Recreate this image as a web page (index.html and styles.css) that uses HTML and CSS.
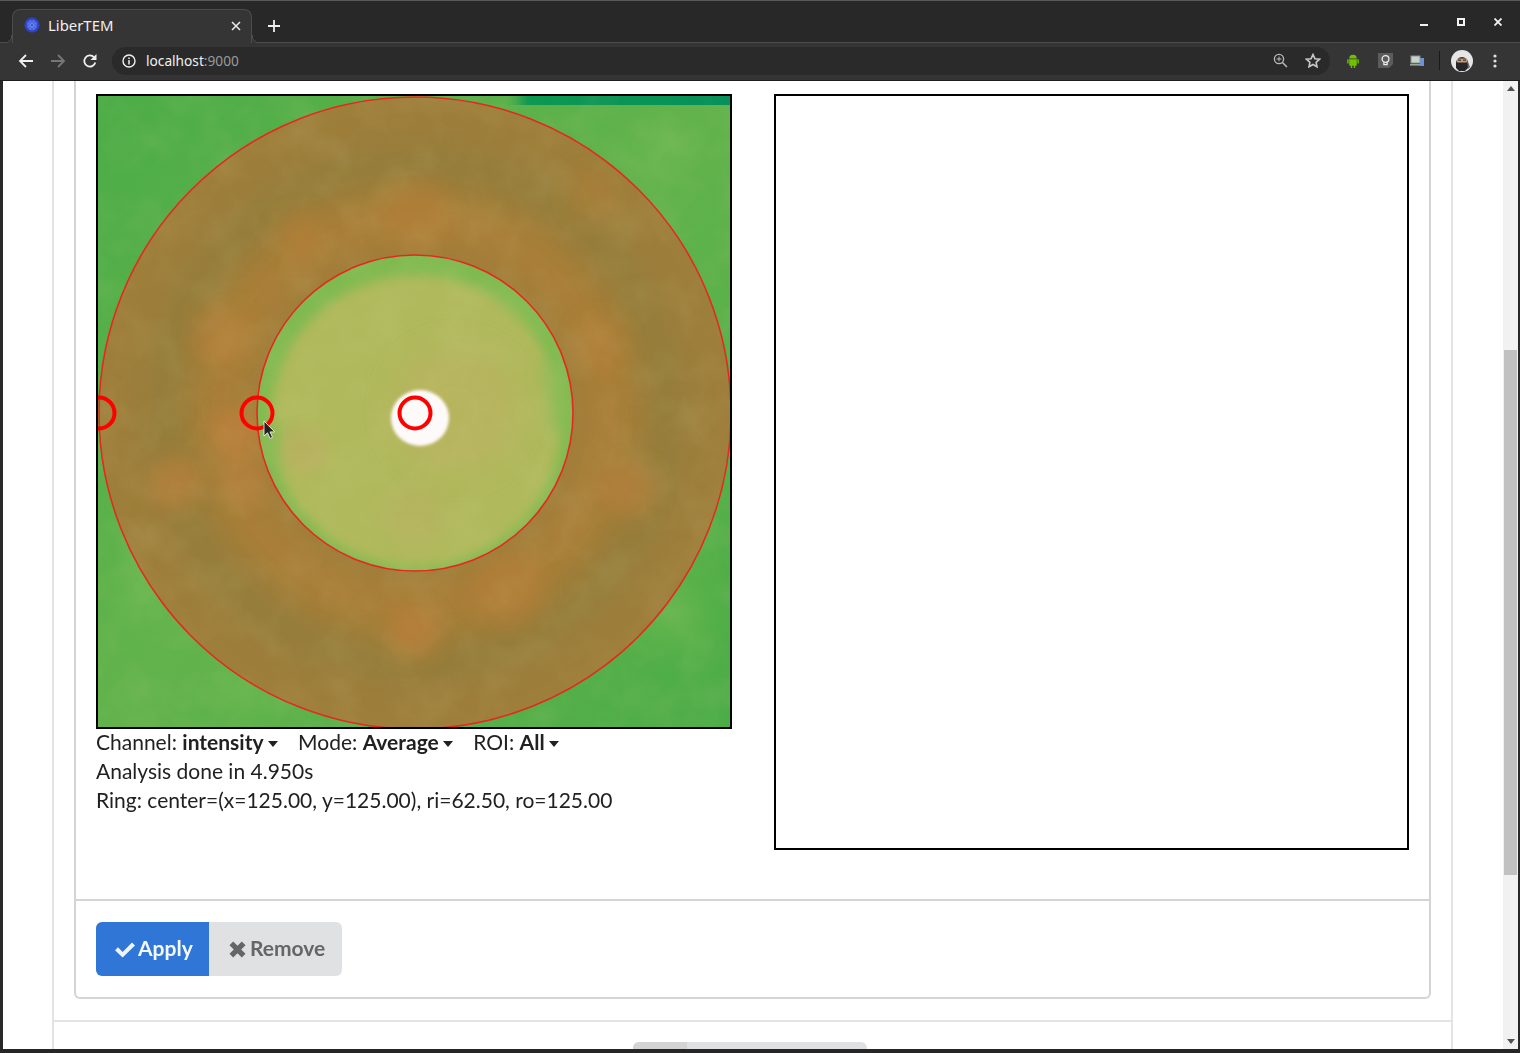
FILE: index.html
```html
<!DOCTYPE html>
<html lang="en">
<head>
<meta charset="utf-8">
<title>LiberTEM</title>
<link rel="stylesheet" href="styles.css">
</head>
<body>
<div class="window">
  <div class="tabstrip">
    <div class="tab">
      <svg class="favicon" width="16" height="16" viewBox="0 0 16 16"><circle cx="8" cy="8" r="7.5" fill="#2b46c8"/><circle cx="8" cy="8" r="5.2" fill="#5a6ee8"/><circle cx="8" cy="8" r="2.6" fill="#7fa0f5"/><path d="M3 8h10M8 3v10M4.5 4.5l7 7M11.5 4.5l-7 7" stroke="#3a4fd0" stroke-width=".7"/></svg>
      <span class="tab-title">LiberTEM</span>
      <svg class="tab-close" width="10" height="10" viewBox="0 0 10 10"><path d="M1 1l8 8M9 1l-8 8" stroke="#e8e8e8" stroke-width="1.6"/></svg>
    </div>
    <svg class="new-tab" width="12" height="12" viewBox="0 0 12 12"><path d="M6 0v12M0 6h12" stroke="#f0f0f0" stroke-width="1.8"/></svg>
    <div class="win-controls">
      <svg width="8" height="8" viewBox="0 0 8 8"><path d="M0 7h8" stroke="#f2f2f2" stroke-width="2"/></svg>
      <svg width="8" height="8" viewBox="0 0 8 8"><rect x="1" y="1" width="6" height="6" fill="none" stroke="#f2f2f2" stroke-width="2"/></svg>
      <svg width="8" height="8" viewBox="0 0 8 8"><path d="M.5.5l7 7M7.5.5l-7 7" stroke="#f2f2f2" stroke-width="1.8"/></svg>
    </div>
  </div>
  <div class="toolbar">
    <svg class="nav-icon" width="16" height="16" viewBox="0 0 16 16"><path d="M15 8H2M8 2L2 8l6 6" fill="none" stroke="#f0f0f0" stroke-width="1.8"/></svg>
    <svg class="nav-icon" width="16" height="16" viewBox="0 0 16 16"><path d="M1 8h13M8 2l6 6-6 6" fill="none" stroke="#777" stroke-width="1.8"/></svg>
    <svg class="nav-icon" width="16" height="16" viewBox="0 0 16 16"><path d="M13.3 9.5A5.6 5.6 0 1 1 12 4.2" fill="none" stroke="#f0f0f0" stroke-width="1.8"/><path d="M14.5 1v6h-6z" fill="#f0f0f0"/></svg>
    <div class="omnibox">
      <svg width="14" height="14" viewBox="0 0 14 14"><circle cx="7" cy="7" r="6" fill="none" stroke="#f0f0f0" stroke-width="1.4"/><path d="M7 6v4.4M7 3.4v1.6" stroke="#f0f0f0" stroke-width="1.5"/></svg>
      <span class="url">localhost<span class="url-port">:9000</span></span>
      <span class="omni-spacer"></span>
      <svg width="15" height="15" viewBox="0 0 15 15"><circle cx="6" cy="6" r="4.6" fill="none" stroke="#bbb" stroke-width="1.3"/><path d="M9.5 9.5l4.5 4.5" stroke="#bbb" stroke-width="1.5"/><path d="M3.6 6h4.8M6 3.6v4.8" stroke="#bbb" stroke-width="1"/></svg>
      <svg width="16" height="15" viewBox="0 0 16 15"><path d="M8 1.5l1.9 4.2 4.6.5-3.4 3.1.9 4.5L8 11.5l-4 2.3.9-4.5L1.5 6.2l4.6-.5z" fill="none" stroke="#c8c8c8" stroke-width="1.6"/></svg>
    </div>
    <div class="extensions">
      <svg class="ext-android" width="12" height="14" viewBox="0 0 12 14"><path d="M2.2 4.6a3.8 3.8 0 0 1 7.6 0zM2.2 5.2h7.6v5.6a1 1 0 0 1-1 1H3.2a1 1 0 0 1-1-1zM.2 5.2h1.4v4.4H.2zM10.4 5.2h1.4v4.4h-1.4zM3.8 11.5h1.4V14H3.8zM6.8 11.5h1.4V14H6.8z" fill="#70c000"/></svg>
      <svg class="ext-bulb" width="15" height="15" viewBox="0 0 15 15"><rect width="15" height="15" fill="#5c5c5c"/><path d="M15 11l-4 4h4z" fill="#353535"/><circle cx="7.5" cy="6" r="3.4" fill="none" stroke="#eee" stroke-width="1.3"/><path d="M5.9 9.2v2.4h3.2V9.2" fill="none" stroke="#eee" stroke-width="1.3"/></svg>
      <svg class="ext-device" width="14" height="12" viewBox="0 0 14 12"><rect x="1" y="1" width="9" height="7" fill="#c9d2c9" stroke="#8a948a"/><rect y="9" width="11" height="1.6" fill="#9aa39a"/><rect x="10" y="3" width="4" height="8" fill="#6d94d2"/></svg>
      <span class="ext-divider"></span>
      <svg class="ext-avatar" width="22" height="22" viewBox="0 0 22 22"><circle cx="11" cy="11" r="11" fill="#e6e6e6"/><path d="M5 13a6 6 0 0 1 12 0v5l-3 3H8l-3-3z" fill="#24262a"/><rect x="6" y="8.5" width="10" height="4" rx="1" fill="#c89a70"/><rect x="7" y="9.6" width="3" height="1" fill="#222"/><rect x="12" y="9.6" width="3" height="1" fill="#222"/><path d="M16 9l3 8-2 2z" fill="#6a6a6a"/></svg>
      <svg class="ext-menu" width="4" height="14" viewBox="0 0 4 14"><circle cx="2" cy="2" r="1.6" fill="#e0e0e0"/><circle cx="2" cy="7" r="1.6" fill="#e0e0e0"/><circle cx="2" cy="12" r="1.6" fill="#e0e0e0"/></svg>
    </div>
  </div>
  <div class="viewport">
    <main class="page">
      <section class="outer-segment">
        <div class="card">
          <div class="card-body">
            <div class="col-left">
              <svg class="frame frame-image" width="636" height="635" viewBox="98 96 632 631" role="img" aria-label="Average intensity image with ring selection">
                <defs>
                  <filter id="blur6" x="-30%" y="-30%" width="160%" height="160%"><feGaussianBlur stdDeviation="6"/></filter>
                  <filter id="blur10" x="-30%" y="-30%" width="160%" height="160%"><feGaussianBlur stdDeviation="9"/></filter>
                  <filter id="blur18" x="-30%" y="-30%" width="160%" height="160%"><feGaussianBlur stdDeviation="16"/></filter>
                  <filter id="blur2" x="-30%" y="-30%" width="160%" height="160%"><feGaussianBlur stdDeviation="1.6"/></filter>
                  <filter id="mottle" x="0" y="0" width="100%" height="100%"><feTurbulence type="fractalNoise" baseFrequency=".025" numOctaves="3" seed="7"/><feColorMatrix values="0 0 0 0 .75  0 0 0 0 .72  0 0 0 0 .35  1.1 0 0 0 -.42"/></filter>
                  <clipPath id="ringClip"><path clip-rule="evenodd" d="M415 97a316 316 0 1 0 .01 0zM415 255a158 158 0 1 1-.01 0z"/></clipPath>
                  <clipPath id="discClip"><circle cx="415" cy="413" r="158"/></clipPath>
                  <linearGradient id="bgGrad" x1="0" y1="0" x2="1" y2="1"><stop offset="0" stop-color="#4cad47"/><stop offset=".5" stop-color="#62b34c"/><stop offset="1" stop-color="#4cad47"/></linearGradient>
                  <linearGradient id="stripGrad" x1="0" y1="0" x2="1" y2="0"><stop offset="0" stop-color="#36a64c" stop-opacity="0"/><stop offset=".1" stop-color="#0d9850"/><stop offset="1" stop-color="#06905a"/></linearGradient>
                </defs>
                <rect x="98" y="96" width="632" height="632" fill="url(#bgGrad)"/>
                <g filter="url(#blur18)" fill="#6ab84f" opacity=".7">
                  <circle cx="150" cy="590" r="36"/><circle cx="250" cy="680" r="36"/><circle cx="670" cy="610" r="36"/><circle cx="660" cy="150" r="30"/>
                </g>
                <rect x="505" y="96" width="225" height="9" fill="url(#stripGrad)"/>
                <g clip-path="url(#ringClip)">
                  <rect x="98" y="96" width="632" height="632" fill="#9e7e3b"/>
                  <circle cx="415" cy="413" r="195" fill="none" stroke="#ad7f39" stroke-width="50" opacity=".8" filter="url(#blur18)"/>
                  <circle cx="415" cy="413" r="252" fill="none" stroke="#8f7e3e" stroke-width="26" opacity=".8" filter="url(#blur18)"/>
                  <g filter="url(#blur10)" fill="#b8803a">
                    <circle cx="237" cy="432" r="25"/>
                    <circle cx="175" cy="483" r="26" opacity=".7"/>
                    <circle cx="413" cy="632" r="26" opacity=".75"/>
                    <circle cx="510" cy="590" r="36" opacity=".5"/>
                    <circle cx="630" cy="490" r="28" opacity=".6"/>
                    <circle cx="592" cy="197" r="26" opacity=".3"/>
                    <circle cx="415" cy="215" r="36" opacity=".4"/>
                    <circle cx="220" cy="335" r="30" opacity=".5"/>
                    <circle cx="600" cy="345" r="28" opacity=".4"/>
                    <circle cx="300" cy="235" r="24" opacity=".4"/>
                    <circle cx="245" cy="480" r="24" opacity=".6"/>
                  </g>
                </g>
                <g clip-path="url(#discClip)">
                  <circle cx="415" cy="413" r="158" fill="#7fba50"/>
                  <circle cx="416" cy="421" r="146" fill="#b0b95b" filter="url(#blur6)"/>
                  <g filter="url(#blur10)" fill="#86bb52">
                    <path d="M552 350l20 40v50l-18-10q-6-40-8-60z"/>
                    <path d="M262 420l18 6 4 30-8 16-12-20z"/>
                  </g>
                  <circle cx="455" cy="410" r="62" fill="#bcb160" opacity=".6" filter="url(#blur18)"/>
                  <circle cx="305" cy="450" r="24" fill="#b8b05f" opacity=".8" filter="url(#blur6)"/>
                  <circle cx="415" cy="515" r="30" fill="#b6b25e" opacity=".7" filter="url(#blur10)"/>
                </g>
                <rect x="98" y="96" width="632" height="632" filter="url(#mottle)" opacity=".18"/>
                <ellipse cx="420" cy="418" rx="29" ry="28" fill="#fffafa" filter="url(#blur2)"/>
                <g fill="none" stroke="#e8281e" stroke-width="1.6">
                  <circle cx="415" cy="413" r="316"/>
                  <circle cx="415" cy="413" r="158"/>
                </g>
                <g fill="none" stroke="#ff0000" stroke-width="4">
                  <circle cx="415" cy="413" r="15.5"/>
                  <circle cx="257" cy="413" r="15.5"/>
                  <circle cx="99" cy="413" r="15.5"/>
                </g>
                <path d="M264 421v15l3.5-3.2 2.6 5.6 2.4-1.1-2.5-5.4h4.7z" fill="#222" stroke="#fff" stroke-width=".8"/>
              </svg>
              <div class="controls">
                <span class="control">Channel: <b>intensity</b><i class="caret"></i></span>
                <span class="control">Mode: <b>Average</b><i class="caret"></i></span>
                <span class="control">ROI: <b>All</b><i class="caret"></i></span>
              </div>
              <p class="line">Analysis done in 4.950s</p>
              <p class="line">Ring: center=(x=125.00, y=125.00), ri=62.50, ro=125.00</p>
            </div>
            <div class="col-right">
              <div class="frame frame-blank"></div>
            </div>
          </div>
          <div class="card-footer">
            <div class="btn-group">
              <button class="btn btn-primary"><svg width="22" height="17" viewBox="0 0 22 17"><path d="M1 9.3l3-3 4.6 4.6L18 1.4l3 3L8.6 16.6z" fill="#eef4fc"/></svg><span>Apply</span></button>
              <button class="btn btn-secondary"><svg width="17" height="17" viewBox="0 0 17 17"><path d="M4.2.5l4.3 4.3L12.8.5l3.7 3.7-4.3 4.3 4.3 4.3-3.7 3.7-4.3-4.3-4.3 4.3-3.7-3.7 4.3-4.3L.5 4.2z" fill="#666"/></svg><span>Remove</span></button>
            </div>
          </div>
        </div>
        <div class="outer-rule"></div>
        <div class="next-tabs"><span class="next-tab-active"></span></div>
      </section>
    </main>
    <aside class="scrollbar">
      <i class="sb-up"></i>
      <div class="sb-track"><div class="sb-thumb"></div></div>
      <i class="sb-down"></i>
    </aside>
  </div>
</div>
</body>
</html>
```
FILE: styles.css
```css
* { box-sizing: border-box; }
html, body { margin: 0; height: 100%; overflow: hidden; }
body { font-family: "Lato", "Open Sans", sans-serif; background: #262626; }

.window {
  width: 1520px;
  height: 1053px;
  display: flex;
  flex-direction: column;
  background: #282828;
  border-top: 1px solid #5a5a5a;
  border-bottom: 4px solid #262626;
}

/* Browser chrome */
.tabstrip {
  height: 41px;
  flex: none;
  display: flex;
  align-items: flex-end;
  padding-left: 12px;
  background: #282828;
}
.tab {
  position: relative;
  z-index: 1;
  width: 240px;
  height: 34px;
  margin-bottom: -1px;
  display: flex;
  align-items: center;
  padding: 0 10px 3px 11px;
  background: #353535;
  border: 1px solid #4c4c4c;
  border-bottom: 0;
  border-radius: 8px 8px 0 0;
  color: #f0f0f0;
  font-family: "Noto Sans", sans-serif;
  font-size: 14.9px;
}
.tab::before, .tab::after {
  content: "";
  position: absolute;
  bottom: 0;
  width: 8px;
  height: 8px;
  background: radial-gradient(circle at 0 0, transparent 7.5px, #4c4c4c 7.5px, #4c4c4c 8.5px, #353535 8.5px);
}
.tab::before { left: -9px; }
.tab::after { right: -9px; transform: scaleX(-1); }
.favicon { flex: none; }
.tab-title { flex: 1; margin-left: 8px; }
.tab-close { flex: none; margin-bottom: -1px; }
.new-tab { margin: 0 0 10px 16px; }
.win-controls {
  margin-left: auto;
  align-self: flex-start;
  display: flex;
  gap: 29px;
  padding: 17px 18px 0 0;
}

.toolbar {
  height: 39px;
  flex: none;
  display: flex;
  align-items: center;
  padding: 0 0 2px 18px;
  background: #353535;
  border-top: 1px solid #4c4c4c;
  border-bottom: 1px solid #1c1c1c;
}
.nav-icon { margin-right: 16px; flex: none; }
.omnibox {
  width: 1218px;
  height: 28px;
  margin-left: -2px;
  display: flex;
  align-items: center;
  gap: 17px;
  padding: 0 9px 0 10px;
  border-radius: 14px;
  background: #2a2a2a;
}
.url {
  margin-left: -7px;
  color: #f0f0f0;
  font-family: "Noto Sans", sans-serif;
  font-size: 13.7px;
}
.url-port { color: #9a9a9a; }
.omni-spacer { flex: 1; }
.extensions {
  display: flex;
  align-items: center;
  padding-left: 17px;
}
.ext-bulb { margin-left: 19px; }
.ext-device { margin-left: 17px; }
.ext-divider { width: 1px; height: 19px; margin-left: 15px; background: #1a1a1a; }
.ext-avatar { margin-left: 11px; }
.ext-menu { margin-left: 20px; }

/* Page viewport */
.viewport {
  flex: 1;
  min-height: 0;
  display: flex;
  margin: 0 2px 0 3px;
  background: #fff;
  overflow: hidden;
}
.page { flex: 1; min-width: 0; padding-left: 49px; overflow: hidden; }
.outer-segment {
  width: 1401px;
  border-left: 2px solid #e3e3e4;
  border-right: 2px solid #e3e3e4;
  padding-left: 20px;
  padding-right: 20px;
}
.card {
  width: 1357px;
  border: 2px solid #d4d4d5;
  border-top: 0;
  border-radius: 0 0 6px 6px;
  color: #212121;
  font-size: 21px;
  line-height: 29px;
}
.card-body {
  height: 820px;
  display: grid;
  grid-template-columns: 636px 636px;
  column-gap: 42px;
  padding: 13px 20px 0;
  border-bottom: 2px solid #d4d4d5;
}
.frame { display: block; border: 2px solid #000; background: #fff; }
.frame-blank { height: 756px; width: 635px; }
.controls { display: flex; gap: 20.5px; margin-top: -2px; }
.control b { font-weight: 700; }
.caret {
  display: inline-block;
  margin-left: 4px;
  vertical-align: 3px;
  border-left: 5.5px solid transparent;
  border-right: 5.5px solid transparent;
  border-top: 6px solid #212121;
}
.line { margin: 0; }
.card-footer { padding: 21px 20px; }
.btn-group { display: flex; }
.btn {
  height: 54px;
  border: 0;
  display: flex;
  align-items: center;
  font-family: inherit;
  font-size: 21px;
  font-weight: 700;
}
.btn span { margin-top: -4px; }
.btn-primary {
  width: 113px;
  padding-left: 18px;
  background: #2f76d6;
  color: #f4f8fd;
  border-radius: 6px 0 0 6px;
}
.btn-primary svg { margin-right: 2px; }
.btn-secondary {
  width: 133px;
  padding-left: 20px;
  background: #e0e1e2;
  color: #666;
  border-radius: 0 6px 6px 0;
}
.btn-secondary svg { margin-right: 4px; }
.outer-rule {
  height: 2px;
  margin: 21px -20px 0;
  background: #e3e3e4;
}
.next-tabs {
  width: 234px;
  height: 7px;
  margin: 20px 0 0 559px;
  background: #e0e1e2;
  border-radius: 6px 6px 0 0;
  overflow: hidden;
}
.next-tab-active { display: block; width: 54px; height: 7px; background: #d4d4d5; }

/* Scrollbar */
.scrollbar {
  width: 15px;
  flex: none;
  display: flex;
  flex-direction: column;
  align-items: center;
  background: #f1f1f1;
}
.sb-up, .sb-down {
  flex: none;
  width: 0;
  height: 0;
  border-left: 4px solid transparent;
  border-right: 4px solid transparent;
}
.sb-up { margin-top: 5px; border-bottom: 5px solid #505050; }
.sb-down { margin-bottom: 5px; border-top: 5px solid #505050; }
.sb-track { flex: 1; width: 100%; padding-top: 259px; padding-left: 1px; padding-right: 1px; }
.sb-thumb { height: 525px; background: #c1c1c1; }
```
